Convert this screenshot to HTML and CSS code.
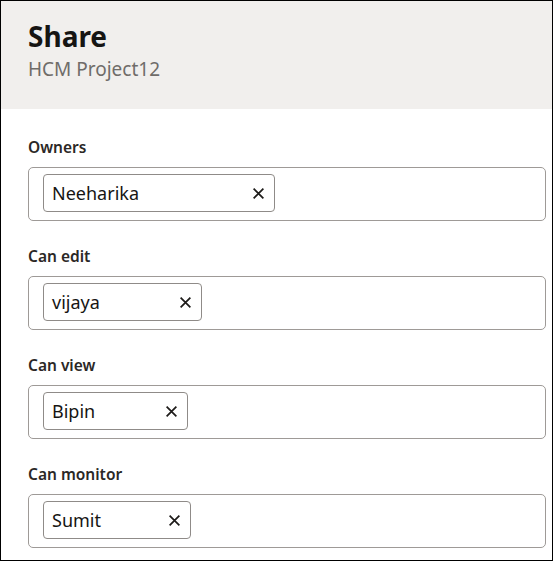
FILE: index.html
```html
<!DOCTYPE html>
<html>
<head>
    <title>Share</title>
    <meta charset="UTF-8">
    <meta name="viewport" content="width=device-width, initial-scale=1.0">
    <link rel="stylesheet" href="styles.css">
</head>
<body>
    <div class="frame">
        <div class="header">
            <h1 class="title">Share</h1>
            <div class="subtitle">HCM Project12</div>
        </div>

        <div class="content">
            <div class="field">
                <div class="label">Owners</div>
                <div class="box">
                    <div class="chip chip-owner">
                        <span class="chip-name">Neeharika</span>
                        <svg class="chip-x" viewBox="0 0 12 12"><path d="M1.5 1.5l9 9M10.5 1.5l-9 9"/></svg>
                    </div>
                </div>
            </div>

            <div class="field">
                <div class="label">Can edit</div>
                <div class="box">
                    <div class="chip chip-edit">
                        <span class="chip-name">vijaya</span>
                        <svg class="chip-x" viewBox="0 0 12 12"><path d="M1.5 1.5l9 9M10.5 1.5l-9 9"/></svg>
                    </div>
                </div>
            </div>

            <div class="field">
                <div class="label">Can view</div>
                <div class="box">
                    <div class="chip chip-view">
                        <span class="chip-name">Bipin</span>
                        <svg class="chip-x" viewBox="0 0 12 12"><path d="M1.5 1.5l9 9M10.5 1.5l-9 9"/></svg>
                    </div>
                </div>
            </div>

            <div class="field">
                <div class="label">Can monitor</div>
                <div class="box">
                    <div class="chip chip-monitor">
                        <span class="chip-name">Sumit</span>
                        <svg class="chip-x" viewBox="0 0 12 12"><path d="M1.5 1.5l9 9M10.5 1.5l-9 9"/></svg>
                    </div>
                </div>
            </div>
        </div>
    </div>
</body>
</html>
```

FILE: styles.css
```css
* {
    box-sizing: border-box;
    margin: 0;
    padding: 0;
}

body {
    font-family: 'Noto Sans', 'Open Sans', sans-serif;
    background: #fff;
    color: #161513;
}

.frame {
    width: 553px;
    height: 561px;
    border: 1px solid #000;
    overflow: hidden;
    background: #fff;
}

.header {
    background: #f1efed;
    padding: 18px 27px 28px;
    height: 108px;
}

.title {
    font-size: 28px;
    line-height: 34px;
    font-weight: 700;
    color: #161513;
}

.subtitle {
    margin-top: 4px;
    font-size: 19px;
    line-height: 24px;
    color: #6f6c69;
}

.content {
    padding: 28px 6px 0 27px;
}

.field {
    margin-bottom: 25px;
}

.label {
    font-size: 15.5px;
    line-height: 20px;
    font-weight: 600;
    color: #2b2826;
    margin-bottom: 10px;
}

.box {
    height: 54px;
    border: 1px solid #9e9a97;
    border-radius: 5px;
    padding: 6px 14px;
}

.chip {
    height: 38px;
    border: 1px solid #8f8b88;
    border-radius: 4px;
    display: flex;
    align-items: center;
    justify-content: space-between;
    padding: 0 9px 0 8px;
}

.chip-owner { width: 232px; }
.chip-edit { width: 159px; }
.chip-view { width: 145px; }
.chip-monitor { width: 148px; }

.chip-name {
    font-size: 18px;
    color: #161513;
}

.chip-x {
    width: 13px;
    height: 13px;
    fill: none;
    stroke: #1d1b19;
    stroke-width: 1.6;
}
```
